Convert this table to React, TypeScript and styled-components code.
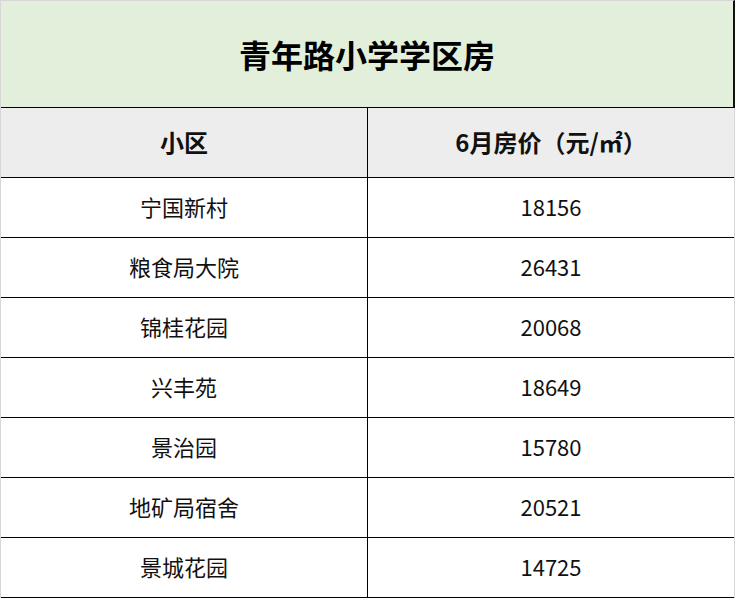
import { Fragment } from 'react';
import styled, { createGlobalStyle } from 'styled-components';

const GlobalStyle = createGlobalStyle`
  html, body {
    margin: 0;
    padding: 0;
    background: #ffffff;
  }
  body {
    font-family: 'Noto Sans CJK SC', 'Noto Sans', sans-serif;
    color: #000;
  }
`;

const Sheet = styled.div`
  width: 735px;
  box-sizing: border-box;
  border-left: 1px solid #d6d6d6;
`;

const TitleBar = styled.div`
  height: 108px;
  box-sizing: border-box;
  background-color: #e2efda;
  border-top: 1px solid #d6d6d6;
  border-right: 2px solid #111;
  border-bottom: 1px solid #000;
  display: flex;
  align-items: center;
  justify-content: center;
`;

const Title = styled.h1`
  margin: 0;
  font-size: 32px;
  font-weight: 700;
`;

const Grid = styled.div`
  display: grid;
  grid-template-columns: 367px 1fr;
  border-right: 1px solid #d6d6d6;
`;

const Cell = styled.div<{ $head?: boolean; $first?: boolean }>`
  height: ${(p) => (p.$head ? '70px' : '60px')};
  box-sizing: border-box;
  display: flex;
  align-items: center;
  justify-content: center;
  border-bottom: 1px solid #000;
  border-right: ${(p) => (p.$first ? '1px solid #000' : 'none')};
  background-color: ${(p) => (p.$head ? '#ededed' : '#ffffff')};
  font-size: ${(p) => (p.$head ? '24px' : '22px')};
  font-weight: ${(p) => (p.$head ? 700 : 400)};
  color: #111;
  padding-bottom: 3px;
`;

const rows: [string, string][] = [
  ['宁国新村', '18156'],
  ['粮食局大院', '26431'],
  ['锦桂花园', '20068'],
  ['兴丰苑', '18649'],
  ['景治园', '15780'],
  ['地矿局宿舍', '20521'],
  ['景城花园', '14725'],
];

function App() {
  return (
    <>
      <GlobalStyle />
      <Sheet>
        <TitleBar>
          <Title>青年路小学学区房</Title>
        </TitleBar>
        <Grid>
          <Cell $head $first>小区</Cell>
          <Cell $head>6月房价（元/㎡）</Cell>
          {rows.map(([name, price]) => (
            <Fragment key={name}>
              <Cell $first>{name}</Cell>
              <Cell>{price}</Cell>
            </Fragment>
          ))}
        </Grid>
      </Sheet>
    </>
  );
}

export default App;
